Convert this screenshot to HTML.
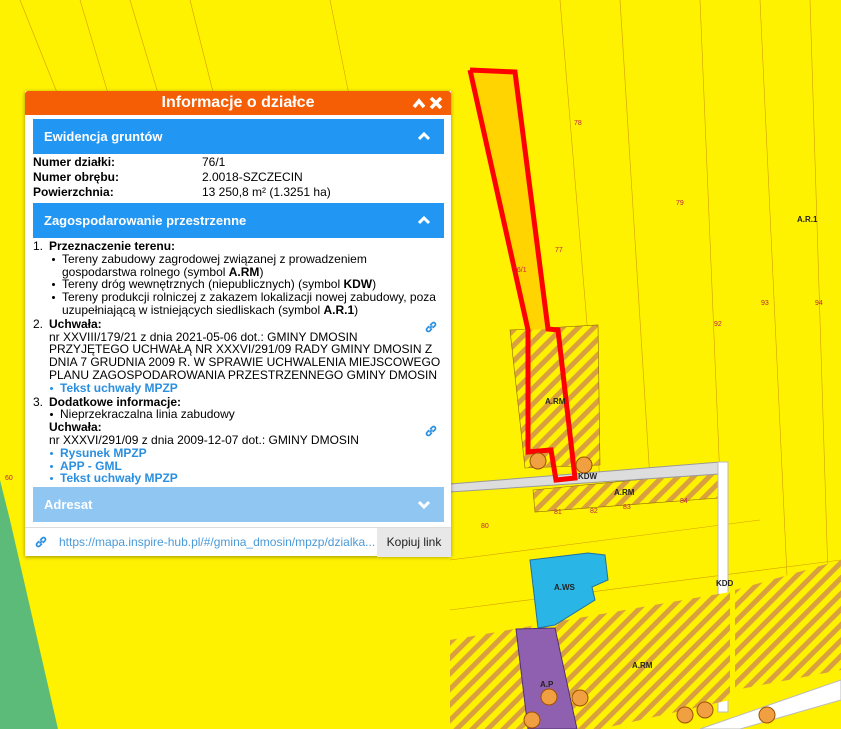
<!DOCTYPE html>
<html><head><meta charset="utf-8"><style>
*{margin:0;padding:0;box-sizing:border-box}
body{width:841px;height:729px;overflow:hidden;background:#fff200;font-family:"Liberation Sans",Arial,sans-serif;position:relative}
svg.map{position:absolute;left:0;top:0}
.panel{position:absolute;left:25px;top:91px;width:426px;height:465px;background:#fff;box-shadow:0 1px 4px rgba(0,0,0,.4)}
.hdr{height:24px;background:#f65e06;color:#fff;font-weight:bold;font-size:16px;text-align:center;line-height:24px;border-radius:3px 3px 0 0;position:relative}
.hdr svg{position:absolute;top:6px}
.sec{position:absolute;left:8px;width:411px;height:35px;background:#2196f3;color:#fff;font-weight:bold;font-size:13px;line-height:35px;padding-left:11px}
.sec svg{position:absolute;right:14px;top:13px}
.rows{position:absolute;left:8px;top:64px;font-size:12px;line-height:15px;color:#000}
.rows b{display:inline-block;width:169px}
.cont{position:absolute;left:8px;top:149px;width:418px;height:245px;overflow:hidden;font-size:12px;line-height:12.8px;color:#000;white-space:nowrap}
.cont .n{position:absolute;left:0}
.cont .ind{padding-left:16px}
.cont ul{list-style:none;padding-left:2px}
.cont li{position:relative;padding-left:11px}
.cont li:before{content:"";position:absolute;left:1px;top:5px;width:3px;height:3px;border-radius:50%;background:#000}
.lnk{color:#2b8fe0;font-weight:bold}
.lnk:before{background:#2b8fe0!important}
.link-ic{position:absolute;left:391px}
.foot{position:absolute;left:0;top:436px;width:426px;height:29px;border-top:1px solid #ddd;font-size:12px;line-height:29px;color:#4a9ad8}
.btn{position:absolute;right:0;top:0;width:74px;height:29px;background:#e8e8e8;color:#222;text-align:center}
</style></head><body>
<svg class="map" width="841" height="729" viewBox="0 0 841 729">
<defs>
<pattern id="h" patternUnits="userSpaceOnUse" width="11" height="11" patternTransform="rotate(45)">
<rect width="11" height="11" fill="#fff200"/><rect width="5" height="11" fill="#d9a040"/></pattern>
<symbol id="lk" viewBox="0 0 16 16"><path d="M7 9l2-2M5.5 7.5l-2 2a2 2 0 0 0 3 3l2-2M10.5 8.5l2-2a2 2 0 0 0-3-3l-2 2" stroke="#2b8fe0" stroke-width="2" fill="none" stroke-linecap="round"/></symbol>
</defs>
<g stroke="#d4a000" stroke-width="0.6" fill="none">
<line x1="20" y1="0" x2="60" y2="100"/><line x1="80" y1="0" x2="110" y2="100"/><line x1="130" y1="0" x2="160" y2="100"/><line x1="190" y1="0" x2="215" y2="100"/><line x1="330" y1="0" x2="350" y2="100"/>
<line x1="560" y1="0" x2="600" y2="480"/><line x1="620" y1="0" x2="650" y2="480"/><line x1="700" y1="0" x2="720" y2="480"/><line x1="760" y1="0" x2="790" y2="640"/><line x1="810" y1="0" x2="830" y2="640"/>
<line x1="450" y1="560" x2="760" y2="520"/><line x1="450" y1="610" x2="841" y2="560"/>
</g>
<polygon points="0,480 0,729 58,729 10,520" fill="#5dbb7a"/>
<polygon points="510,330 598,325 600,465 525,468" fill="url(#h)" stroke="#8a6a00" stroke-width="0.6"/>
<polygon points="470,70 515,72 548,329 528,330" fill="#ffd400"/>
<polygon points="533,490 718,472 718,498 535,512" fill="url(#h)" stroke="#8a6a00" stroke-width="0.6"/>
<polygon points="450,484 720,462 720,474 450,492" fill="#ddd" stroke="#999" stroke-width="1"/>
<rect x="718" y="462" width="10" height="250" fill="#fff" stroke="#bbb"/>
<polygon points="450,640 730,592 730,700 600,729 450,729" fill="url(#h)"/>
<polygon points="735,590 841,560 841,670 735,690" fill="url(#h)"/>
<polygon points="700,729 841,680 841,700 740,729" fill="#fff" stroke="#bbb"/>
<polygon points="530,560 588,553 605,555 608,580 592,587 595,600 555,625 538,628" fill="#29b6e6" stroke="#2070a0"/>
<polygon points="516,629 555,628 577,729 528,729" fill="#9060b0" stroke="#503070"/>
<polyline points="470,70 515,72 548,329 558,330 575,478 556,480 551,450 528,452 528,330 470,70" fill="none" stroke="#f00" stroke-width="5"/>
<g fill="#f0a040" stroke="#a05000" stroke-width="1"><circle cx="538" cy="461" r="8"/><circle cx="584" cy="465" r="8"/><circle cx="549" cy="697" r="8"/><circle cx="580" cy="698" r="8"/><circle cx="685" cy="715" r="8"/><circle cx="705" cy="710" r="8"/><circle cx="767" cy="715" r="8"/><circle cx="532" cy="720" r="8"/></g>
<g font-size="7" fill="#c02050" font-family="Liberation Sans"><text x="574" y="125">78</text><text x="676" y="205">79</text><text x="555" y="252">77</text><text x="513" y="272">76/1</text><text x="714" y="326">92</text><text x="761" y="305">93</text><text x="815" y="305">94</text><text x="481" y="528">80</text><text x="554" y="514">81</text><text x="590" y="513">82</text><text x="623" y="509">83</text><text x="680" y="503">84</text><text x="5" y="480">60</text></g>
<g font-size="8" font-weight="bold" fill="#222" font-family="Liberation Sans"><text x="545" y="404">A.RM</text><text x="614" y="495">A.RM</text><text x="578" y="479">KDW</text><text x="554" y="590">A.WS</text><text x="716" y="586">KDD</text><text x="632" y="668">A.RM</text><text x="797" y="222">A.R.1</text><text x="540" y="687">A.P</text></g>
</svg>
<div class="panel">
<div class="hdr">Informacje o działce
<svg style="right:25px" width="14" height="12"><path d="M2 10L7 4L12 10" stroke="#fff" stroke-width="3.5" fill="none"/></svg>
<svg style="right:8px" width="14" height="12"><path d="M2 1L12 11M12 1L2 11" stroke="#fff" stroke-width="3.5"/></svg></div>
<div class="sec" style="top:28px">Ewidencja gruntów<svg width="12" height="9"><path d="M1 7L6 2L11 7" stroke="#fff" stroke-width="3" fill="none"/></svg></div>
<div class="rows"><b>Numer działki:</b>76/1<br><b>Numer obrębu:</b>2.0018-SZCZECIN<br><b>Powierzchnia:</b>13 250,8 m² (1.3251 ha)</div>
<div class="sec" style="top:112px">Zagospodarowanie przestrzenne<svg width="12" height="9"><path d="M1 7L6 2L11 7" stroke="#fff" stroke-width="3" fill="none"/></svg></div>
<div class="cont">
<div style="position:relative"><span class="n">1.</span><div class="ind"><b>Przeznaczenie terenu:</b>
<ul><li>Tereny zabudowy zagrodowej związanej z prowadzeniem<br>gospodarstwa rolnego (symbol <b>A.RM</b>)</li><li>Tereny dróg wewnętrznych (niepublicznych) (symbol <b>KDW</b>)</li><li>Tereny produkcji rolniczej z zakazem lokalizacji nowej zabudowy, poza<br>uzupełniającą w istniejących siedliskach (symbol <b>A.R.1</b>)</li></ul></div></div>
<div style="position:relative;margin-top:1px"><span class="n">2.</span><svg class="link-ic" style="top:2px" width="14" height="14"><use href="#lk"/></svg><div class="ind"><b>Uchwała:</b><br>nr XXVIII/179/21 z dnia 2021-05-06 dot.: GMINY DMOSIN<br>PRZYJĘTEGO UCHWAŁĄ NR XXXVI/291/09 RADY GMINY DMOSIN Z<br>DNIA 7 GRUDNIA 2009 R. W SPRAWIE UCHWALENIA MIEJSCOWEGO<br>PLANU ZAGOSPODAROWANIA PRZESTRZENNEGO GMINY DMOSIN
<ul style="padding-left:0"><li class="lnk">Tekst uchwały MPZP</li></ul></div></div>
<div style="position:relative;margin-top:1px"><span class="n">3.</span><svg class="link-ic" style="top:28px" width="14" height="14"><use href="#lk"/></svg><div class="ind"><b>Dodatkowe informacje:</b>
<ul style="padding-left:0"><li>Nieprzekraczalna linia zabudowy</li></ul><b>Uchwała:</b><br>nr XXXVI/291/09 z dnia 2009-12-07 dot.: GMINY DMOSIN
<ul style="padding-left:0"><li class="lnk">Rysunek MPZP</li><li class="lnk">APP - GML</li><li class="lnk">Tekst uchwały MPZP</li></ul></div></div>
</div>
<div class="sec" style="top:396px;background:#90c6f2">Adresat<svg width="12" height="9"><path d="M1 2L6 7L11 2" stroke="#fff" stroke-width="3" fill="none"/></svg></div>
<div class="foot"><svg style="position:absolute;left:9px;top:7px" width="14" height="14"><use href="#lk"/></svg><span style="position:absolute;left:34px">https://mapa.inspire-hub.pl/#/gmina_dmosin/mpzp/dzialka...</span><div class="btn">Kopiuj link</div></div>
</div>
</body></html>
